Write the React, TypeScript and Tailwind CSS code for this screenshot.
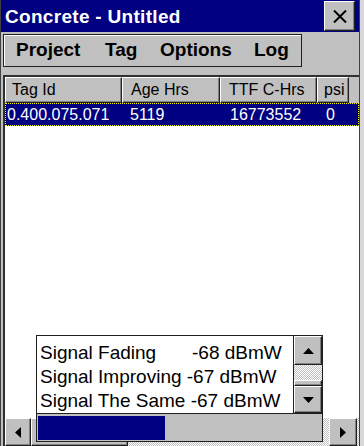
import React from "react";

// classic raised bevel used by buttons and header cells
const raised =
  "bg-[#c0c0c0] border border-t-white border-l-white border-r-[#202020] border-b-[#202020] shadow-[inset_-1px_-1px_#808080]";

const hatch =
  "[background-image:repeating-conic-gradient(#c0c0c0_0_25%,#ffffff_0_50%)] [background-size:2px_2px]";

const Tri = ({ dir }: { dir: "up" | "down" | "left" | "right" }) => {
  const pts = {
    up: "0,6 5.5,0 11,6",
    down: "0,0 11,0 5.5,6",
    left: "6,0 6,11 0,5.5",
    right: "0,0 0,11 6,5.5",
  }[dir];
  const vertical = dir === "up" || dir === "down";
  return (
    <svg width={vertical ? 11 : 6} height={vertical ? 6 : 11} viewBox={vertical ? "0 0 11 6" : "0 0 6 11"}>
      <polygon points={pts} fill="#000" />
    </svg>
  );
};

const columns = [
  { name: "Tag Id", w: "w-[117px]", hp: "pl-[6px]" },
  { name: "Age Hrs", w: "w-[98px]", hp: "pl-[8px]" },
  { name: "TTF C-Hrs", w: "w-[97px]", hp: "pl-[8px]" },
  { name: "psi", w: "w-[32px]", hp: "pl-[6px]" },
];

export default function App() {
  return (
    <div className="relative w-[364px] h-[446px] overflow-hidden bg-[#d8d8d8] font-['Liberation_Sans',Arial,sans-serif]">
      <div className="w-[360px] h-full bg-[#c0c0c0] border-x border-[#404040] flex flex-col">
        {/* Title bar */}
        <div className="h-[32px] shrink-0 bg-[#000080] flex items-center justify-between pl-[4px] pr-[4px]">
          <span className="text-white font-bold text-[19px] leading-none tracking-[0.3px]">Concrete - Untitled</span>
          <button className={`${raised} w-[31px] h-[30px] flex items-center justify-center`}>
            <svg width="14" height="13" viewBox="0 0 14 13">
              <path d="M1 0.5 L13 12.5 M13 0.5 L1 12.5" stroke="#000" strokeWidth="2" />
            </svg>
          </button>
        </div>

        {/* Menu bar */}
        <div className="h-[43px] shrink-0 pt-[2px] pl-[2px]">
          <div className="w-[299px] h-[33px] border border-[#202020] shadow-[inset_1px_1px_#ffffff] flex items-center pl-[12px] text-[19px] font-bold text-black">
            <span className="w-[89px]">Project</span>
            <span className="w-[55px]">Tag</span>
            <span className="w-[94px]">Options</span>
            <span>Log</span>
          </div>
        </div>

        {/* List view */}
        <div className="flex-1 ml-[2px] border-l-2 border-t-2 border-[#303030] bg-white flex flex-col min-h-0">
          <div className="h-[26px] shrink-0 flex bg-[#c0c0c0] text-[16px] text-black">
            {columns.map((c) => (
              <div key={c.name} className={`${raised} ${c.w} ${c.hp} h-full flex items-center`}>
                {c.name}
              </div>
            ))}
          </div>

          {/* selected row */}
          <div className="h-[23px] shrink-0 border border-dotted border-[#ffff00] bg-black">
            <div className="h-full bg-[#000080] flex items-center text-white text-[16px]">
              <span className="w-[116px] pl-[1px]">0.400.075.071</span>
              <span className="w-[98px] pl-[8px]">5119</span>
              <span className="w-[97px] pl-[10px]">16773552</span>
              <span className="pl-[9px]">0</span>
            </div>
          </div>

          <div className="flex-1" />

          {/* horizontal scroll bar */}
          <div className={`h-[28px] shrink-0 flex ${hatch}`}>
            <div className={`${raised} w-[26px] h-full flex items-center justify-center`}>
              <Tri dir="left" />
            </div>
            <div className={`${raised} w-[97px] h-full`} />
            <div className="flex-1" />
            <div className={`${raised} w-[28px] h-full flex items-center justify-center`}>
              <Tri dir="right" />
            </div>
            <div className="w-[2px]" />
          </div>
        </div>
      </div>

      {/* Signal popup */}
      <div className="absolute left-[36px] top-[335px] w-[287px] h-[107px] border border-[#202020] bg-white flex flex-col">
        <div className="h-[77px] flex">
          <div className="flex-1 pt-[5px] pl-[3px] text-[19px] text-black leading-[24px] whitespace-nowrap overflow-hidden">
            <div>
              <span className="inline-block w-[152px]">Signal Fading</span>-68 dBmW
            </div>
            <div>Signal Improving -67 dBmW</div>
            <div>Signal The Same -67 dBmW</div>
          </div>
          <div className={`w-[29px] border-l border-[#202020] flex flex-col ${hatch}`}>
            <div className={`${raised} h-[29px] flex items-center justify-center`}>
              <Tri dir="up" />
            </div>
            <div className="h-[15px]" />
            <div className={`${raised} h-[6px]`} />
            <div className={`${raised} flex-1 flex items-center justify-center`}>
              <Tri dir="down" />
            </div>
          </div>
        </div>
        <div className="flex-1 border-t border-[#202020] bg-[#c0c0c0] pt-[2px] pb-[1px] pl-[1px]">
          <div className="w-[127px] h-full bg-[#000080]" />
        </div>
      </div>
    </div>
  );
}
